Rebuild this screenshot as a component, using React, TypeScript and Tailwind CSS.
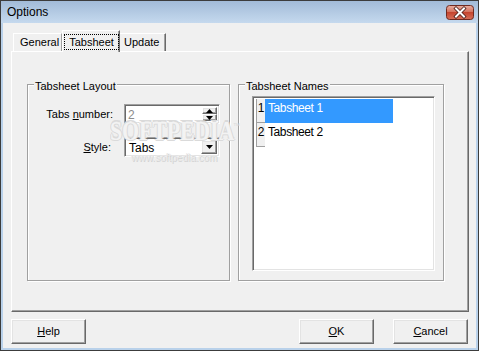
import React from 'react'

const raised =
  'border border-t-white border-l-white border-r-[#696969] border-b-[#696969] shadow-[inset_-1px_-1px_0_#a0a0a0,inset_1px_1px_0_#e3e3e3]'
const sunken =
  'border border-t-[#a0a0a0] border-l-[#a0a0a0] border-r-white border-b-white shadow-[inset_1px_1px_0_#696969,inset_-1px_-1px_0_#e3e3e3]'

const CloseButton = () => (
  <svg width="28" height="15" viewBox="0 0 28 15">
    <defs>
      <linearGradient id="cg" x1="0" y1="0" x2="0" y2="1">
        <stop offset="0" stopColor="#eab0a2" />
        <stop offset="0.45" stopColor="#d4735f" />
        <stop offset="0.5" stopColor="#c5452f" />
        <stop offset="1" stopColor="#d7705a" />
      </linearGradient>
    </defs>
    <rect x="0.5" y="0.5" width="27" height="14" rx="3" fill="url(#cg)" stroke="#6f2a20" />
    <path d="M10 3.5 L18 11.5 M18 3.5 L10 11.5" stroke="#4a1c16" strokeWidth="3.6" strokeLinecap="square" />
    <path d="M10 3.5 L18 11.5 M18 3.5 L10 11.5" stroke="#ffffff" strokeWidth="2" strokeLinecap="square" />
  </svg>
)

const Arrow = ({ up }: { up?: boolean }) => (
  <svg width="7" height="4" viewBox="0 0 7 4">
    <path d={up ? 'M3.5 0 L7 4 L0 4 Z' : 'M0 0 L7 0 L3.5 4 Z'} fill="#000" />
  </svg>
)

const Group = ({ title, className, children }: { title: string; className: string; children?: React.ReactNode }) => (
  <div className={`relative border border-[#a0a0a0] shadow-[1px_1px_0_#fff,inset_1px_1px_0_#fff] ${className}`}>
    <span className="absolute -top-[6px] left-[6px] px-px bg-[#f0f0f0] leading-[14px] whitespace-nowrap">{title}</span>
    {children}
  </div>
)

const Button = ({ children, className = '' }: { children: React.ReactNode; className?: string }) => (
  <div className={`w-[75px] h-[25px] flex items-center justify-center bg-[#f0f0f0] ${raised} ${className}`}>
    {children}
  </div>
)

export default function App() {
  return (
    <div className="relative w-[479px] h-[351px] flex flex-col border border-[#3c3c3c] bg-[#b9d1ea] font-['Liberation_Sans',Arial,sans-serif] text-[11px] text-black overflow-hidden">
      {/* Title bar */}
      <div className="h-[22px] shrink-0 flex items-center justify-between pl-[6px] pr-[4px] bg-gradient-to-b from-[#a2bbd8] to-[#c5d9ee]">
        <span className="text-[12px]">Options</span>
        <CloseButton />
      </div>

      {/* Client area */}
      <div className="flex-1 mx-[2px] mb-[2px] bg-[#f0f0f0] pt-[7px] pl-[8px] pr-[7px] flex flex-col">
        {/* Tabs */}
        <div className="h-[21px] flex items-end pl-[2px]">
          <div className="w-[49px] h-[18px] border-t border-l border-white border-r border-r-[#a0a0a0] flex items-center pl-[6px]">
            General
          </div>
          <div className="relative z-10 w-[58px] h-[22px] -mb-px bg-[#f0f0f0] border-t border-l border-white border-r border-r-[#696969] shadow-[inset_-1px_0_0_#a0a0a0] pt-[3px] pl-px">
            <div className="h-[16px] w-[55px] border border-dotted border-black flex items-center justify-center">
              Tabsheet
            </div>
          </div>
          <div className="w-[46px] h-[18px] border-t border-white border-r border-r-[#696969] shadow-[inset_-1px_0_0_#a0a0a0] flex items-center pl-[4px]">
            Update
          </div>
        </div>

        {/* Tab panel */}
        <div className="h-[261px] flex gap-[8px] pl-[15px] pt-[32px] border-t border-l border-white border-r border-b border-r-[#696969] border-b-[#696969] shadow-[inset_-1px_-1px_0_#a0a0a0]">
          <Group title="Tabsheet Layout" className="w-[203px] h-[197px]">
            <div className="flex flex-col pt-[19px] gap-[13px]">
              <div className="flex items-center">
                <span className="w-[85px] text-right">
                  Tabs <span className="underline">n</span>umber:
                </span>
                <div className={`ml-[11px] w-[96px] h-[20px] bg-white flex items-stretch p-[2px] ${sunken}`}>
                  <span className="flex-1 pl-px leading-[16px] text-[12px] text-[#8c8c8c]">2</span>
                  <div className="w-[15px] flex flex-col">
                    <div className={`flex-1 flex items-center justify-center bg-[#f0f0f0] ${raised}`}>
                      <Arrow up />
                    </div>
                    <div className={`flex-1 flex items-center justify-center bg-[#f0f0f0] ${raised}`}>
                      <Arrow />
                    </div>
                  </div>
                </div>
              </div>
              <div className="flex items-center">
                <span className="w-[85px] text-right pr-[2px]">
                  <span className="underline">S</span>tyle:
                </span>
                <div className={`ml-[11px] w-[96px] h-[20px] bg-white flex items-stretch p-[2px] ${sunken}`}>
                  <span className="flex-1 pl-[2px] leading-[16px] text-[12px]">Tabs</span>
                  <div className={`w-[16px] flex items-center justify-center bg-[#f0f0f0] ${raised}`}>
                    <Arrow />
                  </div>
                </div>
              </div>
            </div>
          </Group>

          <Group title="Tabsheet Names" className="w-[206px] h-[197px]">
            <div className={`ml-[13px] mt-[11px] w-[183px] h-[175px] bg-white p-[2px] ${sunken}`}>
              {['Tabsheet 1', 'Tabsheet 2'].map((name, i) => (
                <div key={name} className="flex h-[24px] text-[12px] leading-[14px] tracking-[-0.4px]">
                  <div className="ml-px w-[9px] bg-[#f0f0f0] border-l border-b border-[#a0a0a0] pt-[2px] text-center">
                    {i + 1}
                  </div>
                  <div className={`w-[128px] pt-[2px] pl-[3px] ${i === 0 ? 'bg-[#3399ff] text-white' : ''}`}>
                    {name}
                  </div>
                </div>
              ))}
            </div>
          </Group>
        </div>

        {/* Buttons */}
        <div className="flex mt-[7px] pr-px">
          <Button>
            <span>
              <span className="underline">H</span>elp
            </span>
          </Button>
          <Button className="ml-auto">
            <span>
              <span className="underline">O</span>K
            </span>
          </Button>
          <Button className="ml-[19px]">
            <span>
              <span className="underline">C</span>ancel
            </span>
          </Button>
        </div>
      </div>

      {/* Watermark overlay */}
      <div className="absolute left-[109px] top-[117px] pointer-events-none font-['Liberation_Serif',serif] font-bold text-[22px] leading-[22px] tracking-[-0.2px] text-[#f3f3f3] [text-shadow:1px_0_#dadada,-1px_0_#dadada,0_1px_#dadada,0_-1px_#dadada] scale-y-[1.2] origin-top-left">
        SOFTPEDIA
      </div>
      <div className="absolute left-[232px] top-[121px] pointer-events-none text-[7px] leading-[8px] text-[#dadada]">™</div>
      <div className="absolute left-[130px] top-[152px] pointer-events-none text-[10px] leading-[10px] text-[#e8e8e8] [text-shadow:1px_1px_0_#d2d2d2]">
        www.softpedia.com
      </div>
    </div>
  )
}
